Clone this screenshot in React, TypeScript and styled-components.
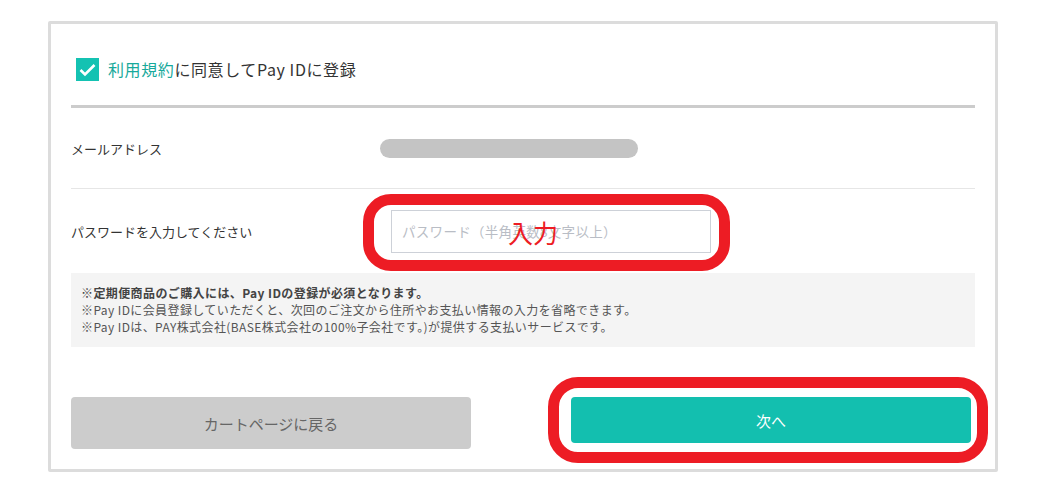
import React from "react";
import styled, { createGlobalStyle } from "styled-components";

const Global = createGlobalStyle`
  html, body { margin: 0; padding: 0; background: #fff; }
  body { font-family: "Noto Sans CJK JP", "Noto Sans", sans-serif; color: #333; }
  * { box-sizing: border-box; }
`;

const Page = styled.div`
  padding: 21px 0 0 48px;
`;

const Card = styled.div`
  width: 950px;
  border: 3px solid #dcdcdc;
  border-radius: 2px;
  padding: 0 20px 20px 20px;
  display: flex;
  flex-direction: column;
`;

const AgreeRow = styled.label`
  display: flex;
  align-items: center;
  gap: 9px;
  padding: 34px 0 24px 5px;
  border-bottom: 3px solid #cccccc;
  font-size: 16px;
  line-height: 23px;
  letter-spacing: 0.6px;
  color: #333;
`;

const Check = styled.span`
  width: 23px;
  height: 23px;
  background: #14c2b2;
  display: flex;
  align-items: center;
  justify-content: center;
`;

const TermsLink = styled.span`
  color: #17a99b;
`;

const FieldRow = styled.div<{ $h: number; $line?: boolean }>`
  display: flex;
  align-items: center;
  height: ${(p) => p.$h}px;
  border-bottom: ${(p) => (p.$line ? "1px solid #e6e6e6" : "none")};
`;

const Label = styled.div`
  width: 309px;
  font-size: 13px;
  color: #333;
`;

const MaskedValue = styled.div`
  width: 258px;
  height: 19px;
  border-radius: 10px;
  background: #c4c4c4;
`;

const InputWrap = styled.div`
  position: relative;
  margin-left: 11px;
`;

const Input = styled.input`
  width: 320px;
  height: 43px;
  border: 1px solid #cdd1d8;
  padding: 0 10px;
  font-family: "Noto Sans CJK JP", sans-serif;
  font-size: 13.5px;
  letter-spacing: 0.3px;
  outline: none;
  &::placeholder { color: #b9bdc5; }
`;

const Annotation = styled.div<{ $l: number; $r: number; $t: number; $b: number; $rad: number }>`
  position: absolute;
  left: ${(p) => p.$l}px;
  right: ${(p) => p.$r}px;
  top: ${(p) => p.$t}px;
  bottom: ${(p) => p.$b}px;
  border: 11px solid #ed1c24;
  border-radius: ${(p) => p.$rad}px;
  pointer-events: none;
`;

const AnnotationText = styled.span`
  position: absolute;
  left: 117px;
  top: 4px;
  font-size: 25px;
  line-height: 36px;
  color: #ed1c24;
  pointer-events: none;
`;

const Notice = styled.div`
  background: #f4f4f4;
  padding: 11px 10px 12px 10px;
  font-size: 12px;
  line-height: 17px;
  letter-spacing: 0.4px;
  color: #555;
`;

const NoticeLine = styled.div<{ $bold?: boolean }>`
  font-weight: ${(p) => (p.$bold ? 700 : 400)};
  color: ${(p) => (p.$bold ? "#444" : "#555")};
`;

const Buttons = styled.div`
  display: flex;
  align-items: flex-start;
  gap: 100px;
  margin-top: 50px;
`;

const ButtonWrap = styled.div`
  position: relative;
`;

const Button = styled.button<{ $primary?: boolean }>`
  width: 400px;
  height: ${(p) => (p.$primary ? 46 : 52)}px;
  border: none;
  border-radius: 4px;
  background: ${(p) => (p.$primary ? "#13bfaf" : "#cccccc")};
  color: ${(p) => (p.$primary ? "#fff" : "#666")};
  font-family: "Noto Sans CJK JP", sans-serif;
  font-size: 15px;
  display: flex;
  align-items: center;
  justify-content: center;
`;

export default function App() {
  return (
    <>
      <Global />
      <Page>
        <Card>
          <AgreeRow>
            <Check>
              <svg width="17" height="14" viewBox="0 0 17 14">
                <path d="M1.5 7 L6 11.5 L15.5 2" fill="none" stroke="#fff" strokeWidth="2.6" />
              </svg>
            </Check>
            <span>
              <TermsLink>利用規約</TermsLink>に同意してPay IDに登録
            </span>
          </AgreeRow>
          <FieldRow $h={81} $line>
            <Label>メールアドレス</Label>
            <MaskedValue />
          </FieldRow>
          <FieldRow $h={84}>
            <Label>パスワードを入力してください</Label>
            <InputWrap>
              <Input type="password" placeholder="パスワード（半角英数8文字以上）" />
              <Annotation $l={-28} $r={-19} $t={-16} $b={-18} $rad={28} />
              <AnnotationText>入力</AnnotationText>
            </InputWrap>
          </FieldRow>
          <Notice>
            <NoticeLine $bold>※定期便商品のご購入には、Pay IDの登録が必須となります。</NoticeLine>
            <NoticeLine>※Pay IDに会員登録していただくと、次回のご注文から住所やお支払い情報の入力を省略できます。</NoticeLine>
            <NoticeLine>※Pay IDは、PAY株式会社(BASE株式会社の100%子会社です。)が提供する支払いサービスです。</NoticeLine>
          </Notice>
          <Buttons>
            <Button>カートページに戻る</Button>
            <ButtonWrap>
              <Button $primary>次へ</Button>
              <Annotation $l={-23} $r={-17} $t={-20} $b={-20} $rad={30} />
            </ButtonWrap>
          </Buttons>
        </Card>
      </Page>
    </>
  );
}
